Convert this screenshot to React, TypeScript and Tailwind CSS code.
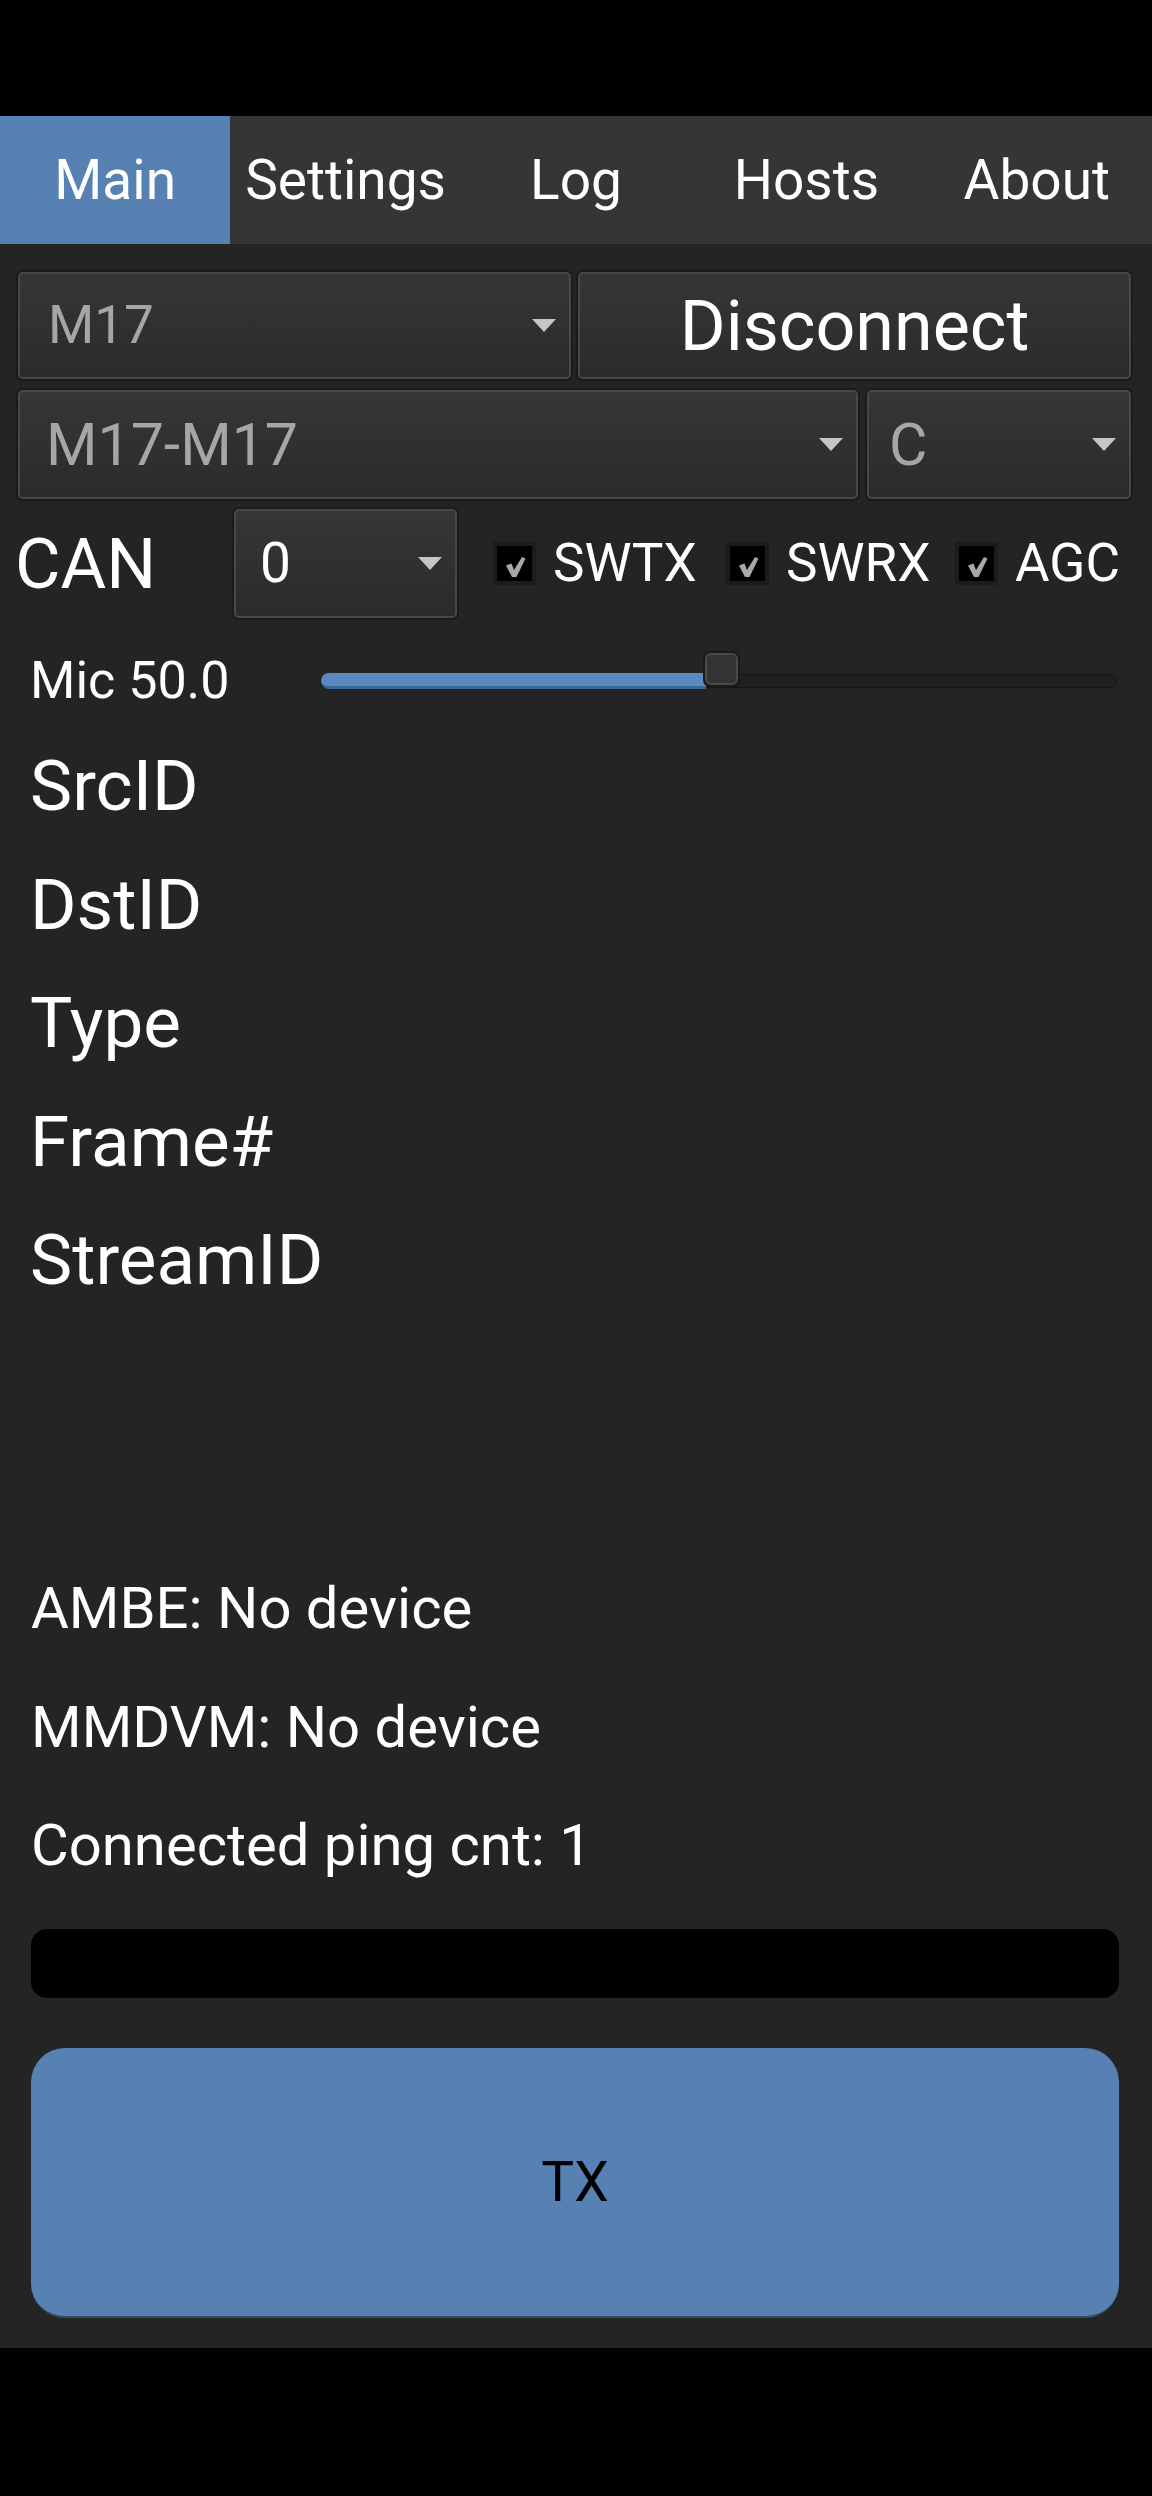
import React from "react";

const font = { fontFamily: "Roboto, 'Noto Sans', sans-serif" };

const Arrow = () => (
  <svg width="24" height="13" viewBox="0 0 24 13" className="shrink-0">
    <path d="M0 0 H24 L12 13 Z" fill="#c6c6c6" />
  </svg>
);

const boxCls =
  "rounded-[5px] border-2 border-[#474747] bg-linear-to-b from-[#363636] to-[#2b2b2b] shadow-[0_0_0_2px_#1b1b1b]";

function Combo({
  text,
  className,
  textCls,
  pl,
}: {
  text: string;
  className: string;
  textCls: string;
  pl: string;
}) {
  return (
    <div className={`${boxCls} ${className} flex items-center justify-between pr-[13px] ${pl}`}>
      <span className={textCls}>{text}</span>
      <Arrow />
    </div>
  );
}

const Check = () => (
  <div className="w-[43px] h-[43px] shrink-0 bg-[#1c1c1c] p-[4px]">
    <div className="w-full h-full bg-black flex items-center justify-center">
      <svg width="35" height="35" viewBox="0 0 35 35">
        <path d="M9 19.5 L14.5 17.5 L17 24 L25 11 L28.5 12.5 L19.5 31 L15 31 Z" fill="#a8a8a8" />
      </svg>
    </div>
  </div>
);

function CheckItem({ label, w }: { label: string; w: string }) {
  return (
    <div className={`flex items-center gap-[17px] ${w}`}>
      <Check />
      <span className="text-[53px] leading-none text-white">{label}</span>
    </div>
  );
}

export default function App() {
  const tabs = ["Main", "Settings", "Log", "Hosts", "About"];
  const fields = ["SrcID", "DstID", "Type", "Frame#", "StreamID"];
  const status = ["AMBE: No device", "MMDVM: No device", "Connected ping cnt: 1"];
  return (
    <div style={font} className="w-[1152px] h-[2496px] bg-black flex flex-col">
      <div className="h-[116px] shrink-0 bg-black" />
      <div className="h-[128px] shrink-0 bg-[#353535] grid grid-cols-5">
        {tabs.map((t, i) => (
          <div
            key={t}
            className={`flex items-center justify-center text-[55px] text-white leading-[128px] ${
              i === 0 ? "bg-[#5681b2]" : ""
            }`}
          >
            {t}
          </div>
        ))}
      </div>
      <div className="bg-[#242424] flex flex-col h-[2104px] shrink-0">
        {/* row 1 */}
        <div className="mt-[28px] pl-[18px] pr-[21px] grid grid-cols-2 gap-[7px] h-[107px]">
          <Combo text="M17" className="h-full" pl="pl-[28px]" textCls="text-[53px] text-[#a6a6a6] leading-none" />
          <div className={`${boxCls} h-full flex items-center justify-center`}>
            <span className="text-[70px] text-white leading-none">Disconnect</span>
          </div>
        </div>
        {/* row 2 */}
        <div className="mt-[11px] pl-[18px] pr-[21px] flex gap-[9px] h-[109px]">
          <Combo text="M17-M17" className="h-full flex-1" pl="pl-[26px]" textCls="text-[59px] text-[#a6a6a6] leading-none" />
          <Combo text="C" className="h-full w-[264px]" pl="pl-[20px]" textCls="text-[59px] text-[#a6a6a6] leading-none" />
        </div>
        {/* CAN row */}
        <div className="mt-[10px] pl-[15px] flex items-center h-[109px]">
          <div className="w-[219px] text-[70px] text-white leading-none">CAN</div>
          <Combo text="0" className="h-full w-[223px]" pl="pl-[24px]" textCls="text-[55px] text-white leading-none" />
          <div className="ml-[36px] flex items-center">
            <CheckItem label="SWTX" w="w-[233px]" />
            <CheckItem label="SWRX" w="w-[229px]" />
            <CheckItem label="AGC" w="" />
          </div>
        </div>
        {/* slider row */}
        <div className="mt-[28px] h-[70px] flex items-center pl-[30px]">
          <div className="w-[290px] text-[52px] text-white leading-none">Mic 50.0</div>
          <div className="relative w-[797px] h-[14px] rounded-full bg-[#202020] border border-[#171717]">
            <div className="absolute left-0 top-[-2px] h-[16px] w-[385px] rounded-l-full bg-[#5b8ac3] border-b-[3px] border-[#3e6797]" />
            <div className="absolute left-[382px] top-[-24px] w-[37px] h-[36px] rounded-[7px] bg-[#1a1a1a] p-[2px]">
              <div className="w-full h-full rounded-[6px] bg-[#333333] border-2 border-[#4a4a4a]" />
            </div>
          </div>
        </div>
        {/* fields */}
        <div className="mt-[11px] pl-[30px] flex flex-col">
          {fields.map((f) => (
            <div key={f} className="h-[118.5px] leading-[118.5px] text-[71px] text-white">
              {f}
            </div>
          ))}
        </div>
        {/* status */}
        <div className="mt-[229.5px] pl-[31px] flex flex-col">
          {status.map((s) => (
            <div key={s} className="h-[118.5px] leading-[118.5px] text-[58px] text-white">
              {s}
            </div>
          ))}
        </div>
        <div className="mt-[24.5px] ml-[31px] mr-[33px] h-[69px] bg-black rounded-[16px]" />
        <div className="mt-[50px] ml-[31px] mr-[33px] h-[270px] bg-[#5681b2] rounded-[34px] flex items-center justify-center border-b-2 border-[#3c4c60]">
          <span className="text-[55px] text-black leading-none">TX</span>
        </div>
      </div>
      <div className="flex-1 bg-black" />
    </div>
  );
}
